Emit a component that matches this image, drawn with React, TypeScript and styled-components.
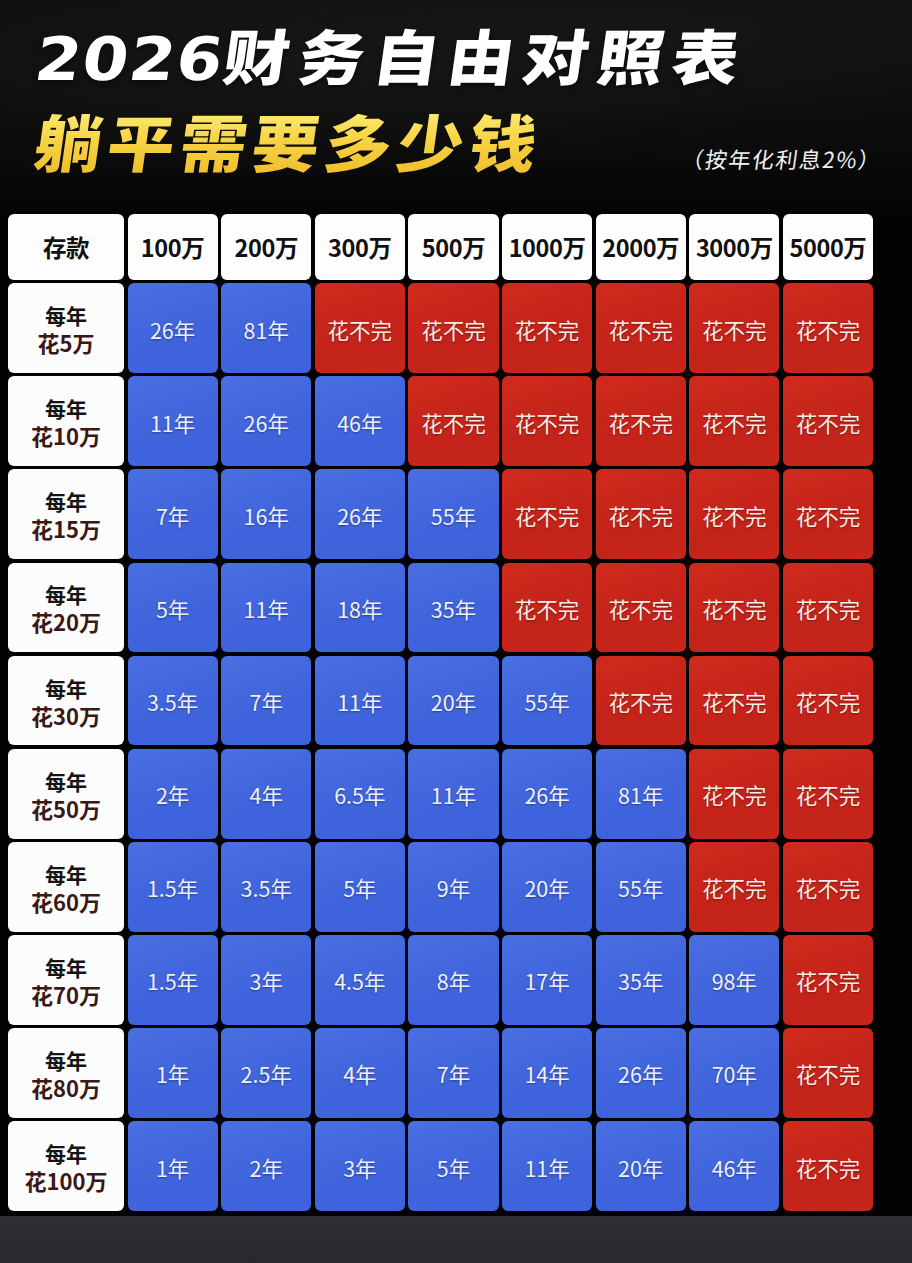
import React from "react";
import styled, { createGlobalStyle } from "styled-components";

const GlobalStyle = createGlobalStyle`
  html, body {
    margin: 0;
    padding: 0;
    background: #050505;
  }
  body {
    font-family: "Noto Sans CJK SC", "Noto Sans", sans-serif;
  }
  * { box-sizing: border-box; }
`;

const Page = styled.div`
  width: 912px;
  height: 1263px;
  display: flex;
  flex-direction: column;
  overflow: hidden;
  background: #040404;
`;

const Header = styled.header`
  height: 214px;
  padding: 18px 40px 0 36px;
  display: flex;
  flex-direction: column;
  background:
    radial-gradient(ellipse at 25% 30%, rgba(48, 48, 48, 0.3), transparent 60%),
    radial-gradient(ellipse at 80% 15%, rgba(40, 46, 40, 0.3), transparent 55%),
    linear-gradient(180deg, #0c0c0c 0%, #090909 75%, #040404 100%);
`;

const TitleMain = styled.h1`
  margin: 0;
  font-family: "Noto Sans CJK SC", sans-serif;
  font-weight: 900;
  font-size: 60px;
  line-height: 72px;
  color: #ffffff;
  letter-spacing: 8px;
  white-space: nowrap;
  transform-origin: left center;
  transform: skewX(-8deg) scaleX(1.1);
  text-shadow: 0 2px 6px rgba(0, 0, 0, 0.6);
`;

const Digits = styled.span`
  font-family: "DejaVu Sans", sans-serif;
  font-weight: 700;
  letter-spacing: 1px;
`;

const SubRow = styled.div`
  display: flex;
  justify-content: space-between;
  align-items: flex-end;
  margin-top: 9px;
`;

const TitleSub = styled.h2`
  margin: 0;
  font-family: "Noto Sans CJK SC", sans-serif;
  font-weight: 900;
  font-size: 62px;
  line-height: 72px;
  letter-spacing: 5px;
  white-space: nowrap;
  transform-origin: left center;
  transform: skewX(-8deg) scaleX(1.08);
  background: linear-gradient(180deg, #fff07a 0%, #f6d445 50%, #efbd2a 100%);
  -webkit-background-clip: text;
  background-clip: text;
  color: transparent;
`;

const Note = styled.span`
  font-family: "Noto Sans CJK SC", sans-serif;
  font-size: 22px;
  font-weight: 400;
  color: #f2f2f2;
  letter-spacing: 1.5px;
  white-space: nowrap;
  transform: skewX(-8deg);
  margin-bottom: 2px;
  margin-right: -10px;
`;

const TableWrap = styled.div`
  background: #020202;
  padding: 0 39px 5px 8px;
`;

const Grid = styled.div`
  display: grid;
  grid-template-columns: 116px repeat(8, 1fr);
  grid-template-rows: 66px repeat(10, 89.8px);
  column-gap: 3.6px;
  row-gap: 3.3px;
  width: 865px;
`;

const Cell = styled.div`
  border-radius: 6px;
  display: flex;
  flex-direction: column;
  align-items: center;
  justify-content: center;
  font-family: "Noto Sans CJK SC", sans-serif;
`;

const HeadCell = styled(Cell)`
  background: #fdfdfd;
  color: #111111;
  font-size: 23.5px;
  font-weight: 700;
  white-space: nowrap;
  letter-spacing: -0.4px;
`;

const LabelCell = styled(Cell)`
  background: #fcfcfc;
  font-size: 21px;
  font-weight: 700;
  line-height: 27px;
  padding-top: 2px;
`;

const LabelTop = styled.span`
  color: #141414;
`;

const LabelBottom = styled.span`
  color: #3a1816;
  font-size: 22px;
`;

const DataCell = styled(Cell)<{ $red: boolean }>`
  background: ${(p) =>
    p.$red
      ? "linear-gradient(160deg, #cf2a1c 0%, #c4231a 60%, #c8261b 100%)"
      : "linear-gradient(160deg, #4a6fe2 0%, #3f64dc 55%, #3d62dc 100%)"};
  color: ${(p) => (p.$red ? "#f7ebe6" : "#eef0fa")};
  font-size: 21.5px;
  font-weight: 400;
  padding-top: 2px;
  text-shadow: 0 1px 2px rgba(0, 0, 0, 0.35);
`;

const Footer = styled.div`
  flex: 1;
  background: linear-gradient(180deg, #2e2f33 0%, #27292c 100%);
`;

const cols = ["100万", "200万", "300万", "500万", "1000万", "2000万", "3000万", "5000万"];

const X = "花不完";
const rows: { spend: string; vals: string[] }[] = [
  { spend: "花5万", vals: ["26年", "81年", X, X, X, X, X, X] },
  { spend: "花10万", vals: ["11年", "26年", "46年", X, X, X, X, X] },
  { spend: "花15万", vals: ["7年", "16年", "26年", "55年", X, X, X, X] },
  { spend: "花20万", vals: ["5年", "11年", "18年", "35年", X, X, X, X] },
  { spend: "花30万", vals: ["3.5年", "7年", "11年", "20年", "55年", X, X, X] },
  { spend: "花50万", vals: ["2年", "4年", "6.5年", "11年", "26年", "81年", X, X] },
  { spend: "花60万", vals: ["1.5年", "3.5年", "5年", "9年", "20年", "55年", X, X] },
  { spend: "花70万", vals: ["1.5年", "3年", "4.5年", "8年", "17年", "35年", "98年", X] },
  { spend: "花80万", vals: ["1年", "2.5年", "4年", "7年", "14年", "26年", "70年", X] },
  { spend: "花100万", vals: ["1年", "2年", "3年", "5年", "11年", "20年", "46年", X] },
];

export default function App() {
  return (
    <>
      <GlobalStyle />
      <Page>
        <Header>
          <TitleMain>
            <Digits>2026</Digits>财务自由对照表
          </TitleMain>
          <SubRow>
            <TitleSub>躺平需要多少钱</TitleSub>
            <Note>（按年化利息2%）</Note>
          </SubRow>
        </Header>
        <TableWrap>
          <Grid>
            <HeadCell>存款</HeadCell>
            {cols.map((c) => (
              <HeadCell key={c}>{c}</HeadCell>
            ))}
            {rows.map((r) => (
              <React.Fragment key={r.spend}>
                <LabelCell>
                  <LabelTop>每年</LabelTop>
                  <LabelBottom>{r.spend}</LabelBottom>
                </LabelCell>
                {r.vals.map((v, i) => (
                  <DataCell key={i} $red={v === X}>
                    {v}
                  </DataCell>
                ))}
              </React.Fragment>
            ))}
          </Grid>
        </TableWrap>
        <Footer />
      </Page>
    </>
  );
}
